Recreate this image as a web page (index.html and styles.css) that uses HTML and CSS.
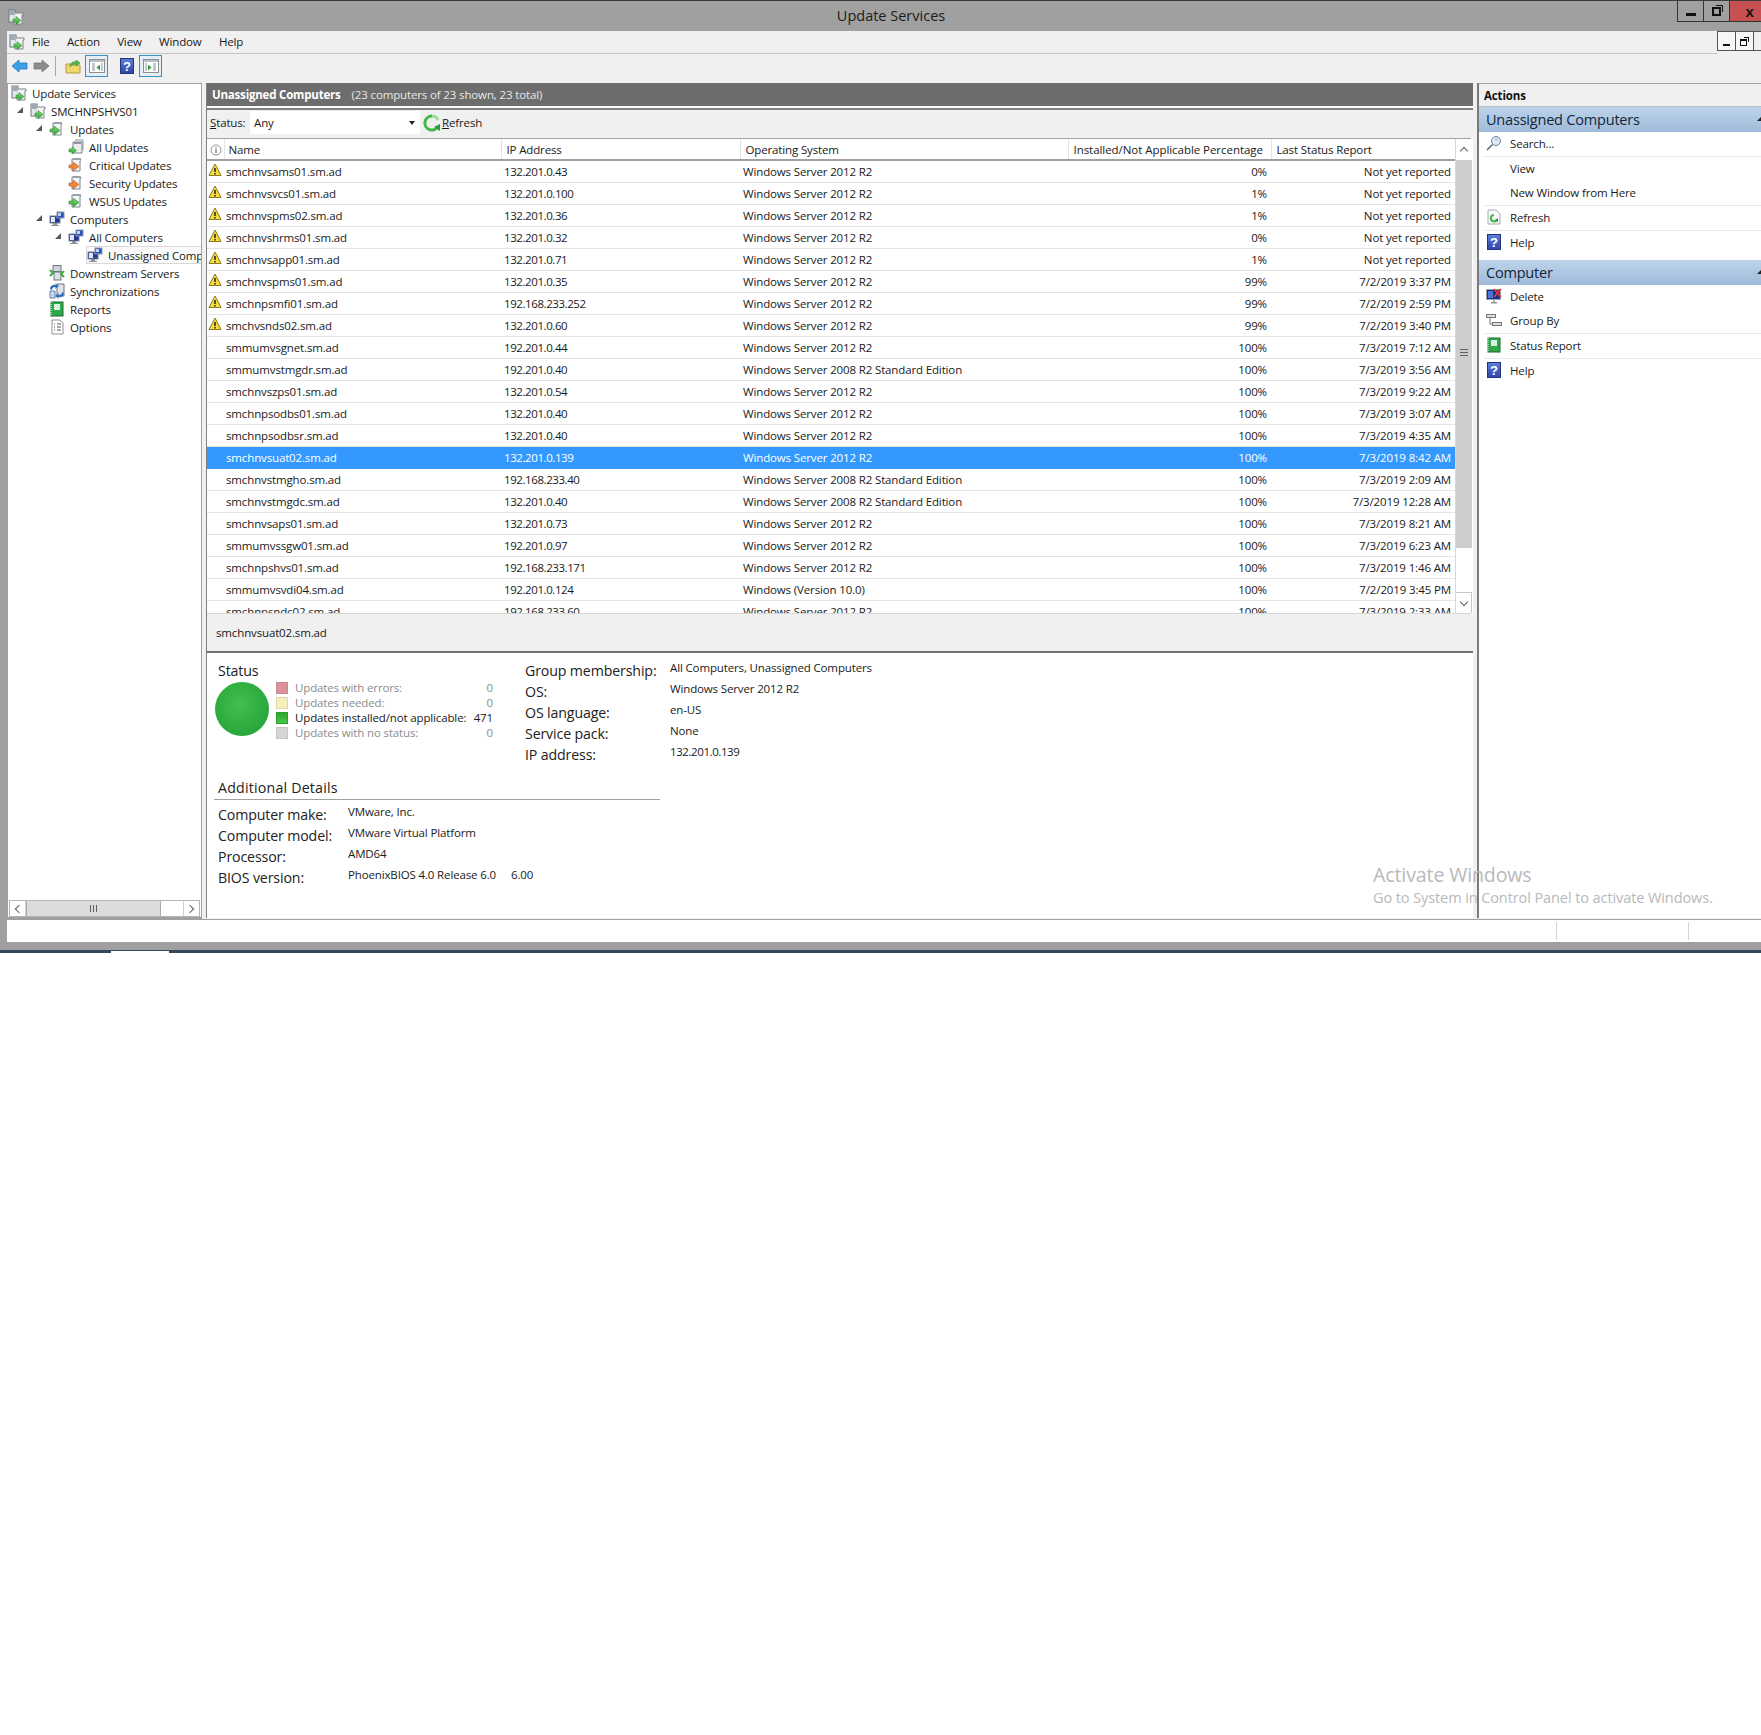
FILE: index.html
```html
<!DOCTYPE html>
<html lang="en">
<head>
<meta charset="utf-8">
<title>Update Services</title>
<link rel="stylesheet" href="styles.css">
</head>
<body>
<svg class="defs" aria-hidden="true">
  <defs>
    <linearGradient id="g-arrow" x1="0" y1="0" x2="0" y2="1"><stop offset="0" stop-color="#7fe07a"/><stop offset="1" stop-color="#2fa32f"/></linearGradient>
    <linearGradient id="g-help" x1="0" y1="0" x2="0" y2="1"><stop offset="0" stop-color="#5f7fd6"/><stop offset="1" stop-color="#2c46a6"/></linearGradient>
    <symbol id="i-server" viewBox="0 0 16 16">
      <rect x="1" y="1" width="6" height="12" fill="#e4e8ec" stroke="#6d7681"/>
      <path d="M2 3h4M2 5h4" stroke="#5d6874"/>
      <path d="M7 4h8v2h-1v9H6v-3" fill="#f4f4f4" stroke="#7b838c"/>
      <path d="M5 10h3V7.500l5 4-5 4V13H5z" fill="url(#g-arrow)" stroke="#2d8c2d" stroke-width="0.6"/>
    </symbol>
    <symbol id="i-updates" viewBox="0 0 16 16">
      <path d="M4 2h9l-1 2v10H4z" fill="#f5f5f5" stroke="#7b838c"/>
      <path d="M5 1h7v2H5z" fill="#9aa3ac"/>
      <path d="M1 8h4V5l6 4.500L5 14v-3H1z" fill="url(#g-arrow)" stroke="#2d8c2d" stroke-width="0.6"/>
    </symbol>
    <symbol id="i-all" viewBox="0 0 16 16">
      <path d="M5 3h9v11H5z" fill="#eee" stroke="#7b838c"/>
      <path d="M7 1h8v10" fill="none" stroke="#8d949c"/>
      <path d="M6 3h7v2H6z" fill="#8f98a1"/>
      <path d="M1 10h3V8l4.500 3.500L4 15v-2H1z" fill="url(#g-arrow)" stroke="#2d8c2d" stroke-width="0.6"/>
    </symbol>
    <symbol id="i-crit" viewBox="0 0 16 16">
      <path d="M4 2h9l-1 2v10H4z" fill="#f5f5f5" stroke="#7b838c"/>
      <path d="M5 1h7v2H5z" fill="#9aa3ac"/>
      <path d="M1 8h4V5l6 4.500L5 14v-3H1z" fill="#f08a3c" stroke="#c4561a" stroke-width="0.6"/>
    </symbol>
    <symbol id="i-computers" viewBox="0 0 16 16">
      <rect x="1" y="5" width="10" height="7" fill="#21379a" stroke="#7b838c"/>
      <path d="M2 6h4v5H2z" fill="#dfe8fa"/>
      <rect x="8" y="1" width="7" height="6" fill="#2a52be" stroke="#8e98a3"/>
      <path d="M9 2h3v3H9z" fill="#bcd5f5"/>
      <path d="M4 12h4v2h2v1H2v-1h2z" fill="#8d949c"/>
    </symbol>
    <symbol id="i-downstream" viewBox="0 0 16 16">
      <rect x="4" y="0.500" width="8" height="6" fill="#cfd4d9" stroke="#6d7681"/>
      <rect x="5" y="7" width="7" height="8" fill="#dfe3e6" stroke="#6d7681"/>
      <path d="M1 5l3 3-3 3M15 6l-3 3 3 3" fill="none" stroke="#3fae3f" stroke-width="2"/>
    </symbol>
    <symbol id="i-sync" viewBox="0 0 16 16">
      <path d="M8 1h7v12H8z" fill="#dfe3e6" stroke="#6d7681"/>
      <path d="M1 6C1 3 4 1 7 2L6 0l4 3-4 3 .5-2C4.500 3.500 3 5 3 7z" fill="#2d6fc0"/>
      <path d="M15 10c0 3-3 5-6 4l1 2-4-3 4-3-.5 2c2 .5 3.500-1 3.500-3z" fill="#2d6fc0"/>
      <path d="M1 8h5v7H1z" fill="#c9d8ec" stroke="#5f7ea8"/>
    </symbol>
    <symbol id="i-report" viewBox="0 0 16 16">
      <rect x="2" y="1" width="12" height="14" fill="#2ea84a" stroke="#1c6b2e"/>
      <rect x="5" y="3" width="6" height="6" fill="#d9f2df"/>
      <path d="M2 1v14" stroke="#a3d9b0" stroke-dasharray="1 1" stroke-width="2"/>
    </symbol>
    <symbol id="i-options" viewBox="0 0 16 16">
      <path d="M3 1h8l3 3v11H3z" fill="#fff" stroke="#8a9097"/>
      <path d="M5 5h1M5 8h1M5 11h1M8 5h4M8 8h4M8 11h4" stroke="#555"/>
    </symbol>
    <symbol id="i-warn" viewBox="0 0 14 14">
      <path d="M7 1l6 11.500H1z" fill="#f7dc3a" stroke="#8a7a20" stroke-linejoin="round"/>
      <path d="M7 5v4M7 10v1.500" stroke="#222" stroke-width="1.500"/>
    </symbol>
    <symbol id="i-help" viewBox="0 0 14 16">
      <rect x="0.500" y="0.500" width="13" height="15" fill="url(#g-help)" stroke="#23367c"/>
      <text x="7" y="13" text-anchor="middle" class="help-q">?</text>
    </symbol>
    <symbol id="i-refresh" viewBox="0 0 18 18">
      <path d="M9 2a7 7 0 1 0 6 10.500" fill="none" stroke="#46b548" stroke-width="3"/>
      <path d="M9 2a7 7 0 0 1 6 4" fill="none" stroke="#98dd95" stroke-width="3"/>
      <path d="M11 13l6-3v7z" fill="#2c9a36"/>
    </symbol>
    <symbol id="i-refdoc" viewBox="0 0 16 16">
      <path d="M2 1h8l4 4v10H2z" fill="#f8f8f8" stroke="#a6abb0"/>
      <path d="M8 6a3.200 3.200 0 1 0 3 4.500" fill="none" stroke="#46b548" stroke-width="2"/>
      <path d="M9 11l3-2v4z" fill="#2c9a36"/>
    </symbol>
    <symbol id="i-search" viewBox="0 0 16 16">
      <circle cx="10" cy="6" r="4.500" fill="#dceaf8" stroke="#6e8297"/>
      <path d="M9 3h3v3H9z" fill="#bcd3ea"/>
      <path d="M6.500 9.500L1 15" stroke="#56606a" stroke-width="1.500"/>
    </symbol>
    <symbol id="i-delete" viewBox="0 0 16 16">
      <rect x="0.500" y="1.500" width="14" height="10" fill="#1b2f8f" stroke="#9aa1a8"/>
      <path d="M2 3h5v7H2z" fill="#4d73d8"/>
      <path d="M5 14h6v1.500H5z" fill="#8c9299"/><path d="M7 11.500h2V14H7z" fill="#aab0b6"/>
      <path d="M8 1l7 8M15 1L8 9" stroke="#dc3c3c" stroke-width="1.800"/>
    </symbol>
    <symbol id="i-group" viewBox="0 0 16 16">
      <rect x="0.500" y="2.500" width="9" height="3" fill="#ddd" stroke="#777"/>
      <rect x="6.500" y="10.500" width="9" height="3" fill="#ddd" stroke="#777"/>
      <path d="M4 6v6h2.500" fill="none" stroke="#777"/>
    </symbol>
    <symbol id="i-info" viewBox="0 0 12 12">
      <circle cx="6" cy="6" r="5" fill="#fff" stroke="#8f8f8f"/>
      <path d="M6 5v4M6 3v1.200" stroke="#555" stroke-width="1.100"/>
    </symbol>
    <symbol id="i-left" viewBox="0 0 17 14"><path d="M1 7l7-6v3h8v6H8v3z" fill="#3f9fe6" stroke="#1f78c0" stroke-width="0.800"/></symbol>
    <symbol id="i-right" viewBox="0 0 17 14"><path d="M16 7L9 1v3H1v6h8v3z" fill="#8c8c8c" stroke="#777" stroke-width="0.800"/></symbol>
    <symbol id="i-folderup" viewBox="0 0 16 16">
      <path d="M1 6h5l1 1h8v8H1z" fill="#f2d76e" stroke="#b59a3a"/>
      <path d="M5 9c0-4 3-6 6-5V2l4 3-4 3V6c-3 0-4 1-6 3z" fill="#55b74d" stroke="#2d8c2d" stroke-width="0.500"/>
    </symbol>
    <symbol id="i-paneleft" viewBox="0 0 16 16">
      <rect x="0.500" y="1.500" width="15" height="13" fill="#fff" stroke="#8a8f94"/>
      <path d="M1 2h14v2H1z" fill="#b9bec3"/>
      <path d="M3 6h3M3 8h3M3 10h3M3 12h3M12 6h2M12 8h2M12 10h2M12 12h2" stroke="#8a8f94"/>
      <path d="M11 6.500v6L7.500 9.500z" fill="#27a044"/>
    </symbol>
    <symbol id="i-paneright" viewBox="0 0 16 16">
      <rect x="0.500" y="1.500" width="15" height="13" fill="#fff" stroke="#8a8f94"/>
      <path d="M1 2h14v2H1z" fill="#b9bec3"/>
      <path d="M2 6h2M2 8h2M2 10h2M2 12h2M10 6h3M10 8h3M10 10h3M10 12h3" stroke="#8a8f94"/>
      <path d="M5 6.500v6l3.500-3z" fill="#27a044"/>
    </symbol>
  </defs>
</svg>

<div class="frame">
  <header class="titlebar">
    <svg class="ico16 app-ico"><use href="#i-server"/></svg>
    <div class="title-text">Update Services</div>
    <div class="winbtns">
      <div class="winbtn"><span class="glyph-min"></span></div>
      <div class="winbtn"><span class="glyph-restore"></span></div>
      <div class="winbtn close"><span class="glyph-x">x</span></div>
    </div>
  </header>

  <div class="client">
    <div class="menubar-row">
      <nav class="menubar">
        <svg class="ico16 menu-ico"><use href="#i-server"/></svg>
        <span class="menu-item">File</span>
        <span class="menu-item">Action</span>
        <span class="menu-item">View</span>
        <span class="menu-item">Window</span>
        <span class="menu-item">Help</span>
      </nav>
      <div class="mdibtns">
        <div class="mdibtn"><span class="mdi-min"></span></div>
        <div class="mdibtn"><span class="mdi-restore"></span></div>
        <div class="mdibtn edge"></div>
      </div>
    </div>

    <div class="toolbar">
      <svg class="tb-arrow"><use href="#i-left"/></svg>
      <svg class="tb-arrow"><use href="#i-right"/></svg>
      <span class="tb-sep"></span>
      <svg class="ico16 tb-folder"><use href="#i-folderup"/></svg>
      <span class="tb-toggle"><svg class="ico16"><use href="#i-paneleft"/></svg></span>
      <svg class="tb-help"><use href="#i-help"/></svg>
      <span class="tb-toggle second"><svg class="ico16"><use href="#i-paneright"/></svg></span>
    </div>

    <main class="panes">
      <aside class="tree">
        <ul class="tree-list">
          <li class="tree-row l0"><svg class="ico16"><use href="#i-server"/></svg><span class="tree-label">Update Services</span></li>
          <li class="tree-row l1"><span class="exp open"></span><svg class="ico16"><use href="#i-server"/></svg><span class="tree-label">SMCHNPSHVS01</span></li>
          <li class="tree-row l2"><span class="exp open"></span><svg class="ico16"><use href="#i-updates"/></svg><span class="tree-label">Updates</span></li>
          <li class="tree-row l3"><span class="exp"></span><svg class="ico16"><use href="#i-all"/></svg><span class="tree-label">All Updates</span></li>
          <li class="tree-row l3"><span class="exp"></span><svg class="ico16"><use href="#i-crit"/></svg><span class="tree-label">Critical Updates</span></li>
          <li class="tree-row l3"><span class="exp"></span><svg class="ico16"><use href="#i-crit"/></svg><span class="tree-label">Security Updates</span></li>
          <li class="tree-row l3"><span class="exp"></span><svg class="ico16"><use href="#i-updates"/></svg><span class="tree-label">WSUS Updates</span></li>
          <li class="tree-row l2"><span class="exp open"></span><svg class="ico16"><use href="#i-computers"/></svg><span class="tree-label">Computers</span></li>
          <li class="tree-row l3"><span class="exp open"></span><svg class="ico16"><use href="#i-computers"/></svg><span class="tree-label">All Computers</span></li>
          <li class="tree-row l4"><span class="exp"></span><span class="tree-sel"><svg class="ico16"><use href="#i-computers"/></svg><span class="tree-label">Unassigned Computers</span></span></li>
          <li class="tree-row l2"><span class="exp"></span><svg class="ico16"><use href="#i-downstream"/></svg><span class="tree-label">Downstream Servers</span></li>
          <li class="tree-row l2"><span class="exp"></span><svg class="ico16"><use href="#i-sync"/></svg><span class="tree-label">Synchronizations</span></li>
          <li class="tree-row l2"><span class="exp"></span><svg class="ico16"><use href="#i-report"/></svg><span class="tree-label">Reports</span></li>
          <li class="tree-row l2"><span class="exp"></span><svg class="ico16"><use href="#i-options"/></svg><span class="tree-label">Options</span></li>
        </ul>
        <div class="hscroll">
          <span class="hs-btn"><span class="chev chev-left"></span></span>
          <span class="hs-thumb"><span class="grip-v"></span></span>
          <span class="hs-track"></span>
          <span class="hs-btn"><span class="chev chev-right"></span></span>
        </div>
      </aside>

      <section class="center">
        <div class="center-head"><strong>Unassigned Computers</strong><span class="center-count">(23 computers of 23 shown, 23 total)</span></div>
        <div class="filterbar">
          <span class="filter-label"><u>S</u>tatus:</span>
          <span class="combo"><span>Any</span><span class="combo-arrow"></span></span>
          <svg class="refresh-ico"><use href="#i-refresh"/></svg>
          <span class="refresh-text"><u>R</u>efresh</span>
        </div>

        <div class="listwrap">
          <div class="listclip">
            <table class="grid">
              <thead>
                <tr>
                  <th class="c-ico"><svg class="info-ico"><use href="#i-info"/></svg></th>
                  <th class="c-name"><span class="hd-name">Name</span></th>
                  <th class="c-ip">IP Address</th>
                  <th class="c-os">Operating System</th>
                  <th class="c-pct">Installed/Not Applicable Percentage</th>
                  <th class="c-date">Last Status Report</th>
                </tr>
              </thead>
              <tbody>
                <tr><td class="warn"><svg><use href="#i-warn"/></svg></td><td>smchnvsams01.sm.ad</td><td>132.201.0.43</td><td>Windows Server 2012 R2</td><td class="num">0%</td><td class="num">Not yet reported</td></tr>
                <tr><td class="warn"><svg><use href="#i-warn"/></svg></td><td>smchnvsvcs01.sm.ad</td><td>132.201.0.100</td><td>Windows Server 2012 R2</td><td class="num">1%</td><td class="num">Not yet reported</td></tr>
                <tr><td class="warn"><svg><use href="#i-warn"/></svg></td><td>smchnvspms02.sm.ad</td><td>132.201.0.36</td><td>Windows Server 2012 R2</td><td class="num">1%</td><td class="num">Not yet reported</td></tr>
                <tr><td class="warn"><svg><use href="#i-warn"/></svg></td><td>smchnvshrms01.sm.ad</td><td>132.201.0.32</td><td>Windows Server 2012 R2</td><td class="num">0%</td><td class="num">Not yet reported</td></tr>
                <tr><td class="warn"><svg><use href="#i-warn"/></svg></td><td>smchnvsapp01.sm.ad</td><td>132.201.0.71</td><td>Windows Server 2012 R2</td><td class="num">1%</td><td class="num">Not yet reported</td></tr>
                <tr><td class="warn"><svg><use href="#i-warn"/></svg></td><td>smchnvspms01.sm.ad</td><td>132.201.0.35</td><td>Windows Server 2012 R2</td><td class="num">99%</td><td class="num">7/2/2019 3:37 PM</td></tr>
                <tr><td class="warn"><svg><use href="#i-warn"/></svg></td><td>smchnpsmfi01.sm.ad</td><td>192.168.233.252</td><td>Windows Server 2012 R2</td><td class="num">99%</td><td class="num">7/2/2019 2:59 PM</td></tr>
                <tr><td class="warn"><svg><use href="#i-warn"/></svg></td><td>smchvsnds02.sm.ad</td><td>132.201.0.60</td><td>Windows Server 2012 R2</td><td class="num">99%</td><td class="num">7/2/2019 3:40 PM</td></tr>
                <tr><td></td><td>smmumvsgnet.sm.ad</td><td>192.201.0.44</td><td>Windows Server 2012 R2</td><td class="num">100%</td><td class="num">7/3/2019 7:12 AM</td></tr>
                <tr><td></td><td>smmumvstmgdr.sm.ad</td><td>192.201.0.40</td><td>Windows Server 2008 R2 Standard Edition</td><td class="num">100%</td><td class="num">7/3/2019 3:56 AM</td></tr>
                <tr><td></td><td>smchnvszps01.sm.ad</td><td>132.201.0.54</td><td>Windows Server 2012 R2</td><td class="num">100%</td><td class="num">7/3/2019 9:22 AM</td></tr>
                <tr><td></td><td>smchnpsodbs01.sm.ad</td><td>132.201.0.40</td><td>Windows Server 2012 R2</td><td class="num">100%</td><td class="num">7/3/2019 3:07 AM</td></tr>
                <tr><td></td><td>smchnpsodbsr.sm.ad</td><td>132.201.0.40</td><td>Windows Server 2012 R2</td><td class="num">100%</td><td class="num">7/3/2019 4:35 AM</td></tr>
                <tr class="selected"><td></td><td>smchnvsuat02.sm.ad</td><td>132.201.0.139</td><td>Windows Server 2012 R2</td><td class="num">100%</td><td class="num">7/3/2019 8:42 AM</td></tr>
                <tr><td></td><td>smchnvstmgho.sm.ad</td><td>192.168.233.40</td><td>Windows Server 2008 R2 Standard Edition</td><td class="num">100%</td><td class="num">7/3/2019 2:09 AM</td></tr>
                <tr><td></td><td>smchnvstmgdc.sm.ad</td><td>132.201.0.40</td><td>Windows Server 2008 R2 Standard Edition</td><td class="num">100%</td><td class="num">7/3/2019 12:28 AM</td></tr>
                <tr><td></td><td>smchnvsaps01.sm.ad</td><td>132.201.0.73</td><td>Windows Server 2012 R2</td><td class="num">100%</td><td class="num">7/3/2019 8:21 AM</td></tr>
                <tr><td></td><td>smmumvssgw01.sm.ad</td><td>192.201.0.97</td><td>Windows Server 2012 R2</td><td class="num">100%</td><td class="num">7/3/2019 6:23 AM</td></tr>
                <tr><td></td><td>smchnpshvs01.sm.ad</td><td>192.168.233.171</td><td>Windows Server 2012 R2</td><td class="num">100%</td><td class="num">7/3/2019 1:46 AM</td></tr>
                <tr><td></td><td>smmumvsvdi04.sm.ad</td><td>192.201.0.124</td><td>Windows (Version 10.0)</td><td class="num">100%</td><td class="num">7/2/2019 3:45 PM</td></tr>
                <tr><td></td><td>smchnpsndc02.sm.ad</td><td>192.168.233.60</td><td>Windows Server 2012 R2</td><td class="num">100%</td><td class="num">7/3/2019 2:33 AM</td></tr>
              </tbody>
            </table>
          </div>
          <div class="vscroll">
            <span class="vs-btn"><span class="chev chev-up"></span></span>
            <span class="vs-thumb"><span class="grip-h"></span></span>
            <span class="vs-track"></span>
            <span class="vs-btn"><span class="chev chev-down"></span></span>
          </div>
        </div>

        <div class="detail-title">smchnvsuat02.sm.ad</div>

        <div class="details">
          <div class="status-row">
            <div class="status-block">
              <div class="big-label status-h">Status</div>
              <div class="status-body">
                <div class="orb"></div>
                <ul class="legend">
                  <li class="muted"><span class="sq sq-err"></span><span class="lg-text">Updates with errors:</span><span>0</span></li>
                  <li class="muted"><span class="sq sq-need"></span><span class="lg-text">Updates needed:</span><span>0</span></li>
                  <li><span class="sq sq-ok"></span><span class="lg-text">Updates installed/not applicable:</span><span>471</span></li>
                  <li class="muted"><span class="sq sq-none"></span><span class="lg-text">Updates with no status:</span><span>0</span></li>
                </ul>
              </div>
            </div>
            <div class="kv group-kv">
              <div class="kv-keys">
                <div class="big-label">Group membership:</div>
                <div class="big-label">OS:</div>
                <div class="big-label">OS language:</div>
                <div class="big-label">Service pack:</div>
                <div class="big-label">IP address:</div>
              </div>
              <div class="kv-vals">
                <div>All Computers, Unassigned Computers</div>
                <div>Windows Server 2012 R2</div>
                <div>en-US</div>
                <div>None</div>
                <div class="ip-val">132.201.0.139</div>
              </div>
            </div>
          </div>
          <div class="big-label add-title">Additional Details</div>
          <div class="kv add-kv">
            <div class="kv-keys">
              <div class="big-label">Computer make:</div>
              <div class="big-label">Computer model:</div>
              <div class="big-label">Processor:</div>
              <div class="big-label">BIOS version:</div>
            </div>
            <div class="kv-vals">
              <div>VMware, Inc.</div>
              <div>VMware Virtual Platform</div>
              <div>AMD64</div>
              <div class="bios"><span>PhoenixBIOS 4.0 Release 6.0</span><span>6.00</span></div>
            </div>
          </div>
        </div>
      </section>

      <aside class="actions">
        <div class="actions-head">Actions</div>
        <div class="act-section"><span>Unassigned Computers</span><span class="act-caret"></span></div>
        <div class="act-item sep"><svg class="ico16"><use href="#i-search"/></svg><span>Search...</span></div>
        <div class="act-item"><span class="ico16"></span><span>View</span></div>
        <div class="act-item sep"><span class="ico16"></span><span>New Window from Here</span></div>
        <div class="act-item sep"><svg class="ico16"><use href="#i-refdoc"/></svg><span>Refresh</span></div>
        <div class="act-item"><svg class="ico16"><use href="#i-help"/></svg><span>Help</span></div>
        <div class="act-section second"><span>Computer</span><span class="act-caret"></span></div>
        <div class="act-item"><svg class="ico16"><use href="#i-delete"/></svg><span>Delete</span></div>
        <div class="act-item sep"><svg class="ico16"><use href="#i-group"/></svg><span>Group By</span></div>
        <div class="act-item sep"><svg class="ico16"><use href="#i-report"/></svg><span>Status Report</span></div>
        <div class="act-item"><svg class="ico16"><use href="#i-help"/></svg><span>Help</span></div>
      </aside>
    </main>

    <footer class="statusbar">
      <span class="sb-cell"></span>
      <span class="sb-cell fixed-a"></span>
      <span class="sb-cell fixed-b"></span>
    </footer>
  </div>

  <div class="taskbar-edge"><span class="task-tab"></span></div>

  <div class="watermark">
    <div class="wm-big">Activate Windows</div>
    <div class="wm-small">Go to System in Control Panel to activate Windows.</div>
  </div>
</div>
</body>
</html>
```

FILE: styles.css
```css
* { box-sizing: border-box; }

html, body {
  margin: 0;
  padding: 0;
  background: #fff;
}

body {
  font-family: "Open Sans", "Noto Sans", "Liberation Sans", sans-serif;
  font-size: 11.5px;
  letter-spacing: -0.14px;
  color: #1a1a1a;
}

ul { list-style: none; margin: 0; padding: 0; }

.defs { position: absolute; width: 0; height: 0; overflow: hidden; }

.ico16 { width: 16px; height: 16px; flex: none; display: block; }

.help-q { font: bold 13px "Liberation Sans", sans-serif; fill: #fff; }

.frame {
  position: relative;
  height: 953px;
  background: #a0a0a0;
  display: flex;
  flex-direction: column;
}

/* title bar */
.titlebar {
  height: 31px;
  flex: none;
  display: flex;
  align-items: flex-start;
  border-top: 1px solid #3a3a3a;
}

.app-ico { margin: 8px 0 0 8px; }

.title-text {
  flex: 1;
  text-align: center;
  font-size: 14.5px;
  letter-spacing: 0;
  line-height: 30px;
  padding-left: 81px;
  color: #1c1c1c;
}

.winbtns { display: flex; height: 21px; width: 84px; flex: none; }

.winbtn {
  width: 27px;
  height: 21px;
  border: 1px solid #333;
  border-top: 0;
  border-left-width: 1px;
  display: flex;
  align-items: center;
  justify-content: center;
  margin-right: -1px;
}

.winbtn.close {
  width: 32px;
  background: #c75050;
  border-right: 0;
  padding-left: 8px;
}

.glyph-min { width: 10px; height: 3px; background: #111; margin-top: 6px; }

.glyph-restore {
  width: 9px;
  height: 9px;
  border: 2px solid #111;
  box-shadow: 2px -2px 0 -1px #a0a0a0, 3px -3px 0 -1px #111;
}

.glyph-x { font: bold 15px/15px "Liberation Sans", sans-serif; color: #111; }

/* client area */
.client {
  flex: 1;
  margin-left: 7px;
  background: #f0f0f0;
  display: flex;
  flex-direction: column;
  min-height: 0;
}

.menubar-row {
  height: 23px;
  flex: none;
  display: flex;
  align-items: flex-start;
}

.menubar {
  flex: 1;
  height: 23px;
  display: flex;
  align-items: center;
  border-bottom: 1px solid #c4c4c4;
  padding: 0 0 1px 2px;
}

.menu-ico { margin-right: 7px; }

.menu-item { margin-right: 17.3px; }

.mdibtns { display: flex; flex: none; width: 44px; height: 20px; }

.mdibtn {
  width: 19px;
  height: 20px;
  border: 1px solid #555;
  background: #f7f7f7;
  margin-right: -1px;
  display: flex;
  align-items: center;
  justify-content: center;
}

.mdibtn.edge { width: 8px; border-right: 0; background: #f0f0f0; }

.mdi-min { width: 7px; height: 2px; background: #111; margin-top: 8px; }

.mdi-restore {
  width: 7px;
  height: 7px;
  border: 1px solid #111;
  border-top-width: 2px;
  box-shadow: 2px -2px 0 -1px #f7f7f7, 3px -3px 0 -1px #111;
  margin: 2px 2px 0 0;
}

.toolbar {
  height: 29px;
  flex: none;
  display: flex;
  align-items: center;
  padding: 0 0 6px 4px;
}

.tb-arrow { width: 17px; height: 14px; margin-right: 5px; flex: none; }

.tb-sep { width: 1px; height: 20px; background: #a8a8a8; margin: 0 9px 0 0; }

.tb-folder { margin-right: 4px; }

.tb-toggle {
  width: 23px;
  height: 22px;
  border: 1px solid #3c8fc6;
  background: #e3eef7;
  display: flex;
  align-items: center;
  justify-content: center;
  flex: none;
}

.tb-toggle.second { margin-left: 5px; }

.tb-help { width: 14px; height: 16px; margin-left: 12px; flex: none; }

/* panes */
.panes {
  flex: 1;
  min-height: 0;
  display: flex;
  border-bottom: 1px solid #a0a0a0;
}

.tree {
  width: 195px;
  flex: none;
  background: #fff;
  border: 1px solid #a0a0a0;
  border-bottom-width: 2px;
  display: flex;
  flex-direction: column;
  min-height: 0;
}

.tree-list { flex: 1; overflow: hidden; }

.tree-row {
  height: 18px;
  display: flex;
  align-items: center;
  white-space: nowrap;
  overflow: hidden;
}

.tree-label { margin-left: 5px; }

.l0 { padding-left: 3px; }
.l1 { padding-left: 8px; }
.l2 { padding-left: 27px; }
.l3 { padding-left: 46px; }
.l4 { padding-left: 65px; }

.exp {
  width: 14px;
  flex: none;
  display: block;
  height: 8px;
}

.exp.open::before {
  content: "";
  display: block;
  width: 0;
  height: 0;
  margin-left: 1px;
  border-style: solid;
  border-width: 0 0 6px 6px;
  border-color: transparent transparent #595959 transparent;
}

.tree-sel {
  flex: 1;
  display: flex;
  align-items: center;
  height: 18px;
  border: 1px solid #d9d9d9;
  border-right: 0;
  background: #fafafa;
  margin-left: -1px;
  margin-right: -100px;
}

.hscroll {
  height: 17px;
  flex: none;
  display: flex;
  align-items: stretch;
  border: 1px solid #b5b5b5;
  margin: 0 1px;
}

.hs-btn { width: 16px; flex: none; display: flex; align-items: center; justify-content: center; background: #fff; border-right: 1px solid #cfcfcf; }
.hs-btn:last-child { border-right: 0; border-left: 1px solid #cfcfcf; }
.hs-thumb { width: 135px; flex: none; background: #dcdcdc; border: 1px solid #ababab; border-width: 0 1px; display: flex; align-items: center; justify-content: center; }
.hs-track { flex: 1; background: #fff; }

.grip-v {
  width: 7px;
  height: 7px;
  background: repeating-linear-gradient(90deg, #606060 0 1px, transparent 1px 3px);
}

.grip-h {
  width: 8px;
  height: 7px;
  background: repeating-linear-gradient(180deg, #606060 0 1px, transparent 1px 3px);
}

.chev {
  width: 6px;
  height: 6px;
  border-left: 1.500px solid #606060;
  border-top: 1.500px solid #606060;
  display: block;
}

.chev-left { transform: rotate(-45deg); margin-left: 3px; }
.chev-right { transform: rotate(135deg); margin-right: 3px; }
.chev-up { transform: rotate(45deg); margin-top: 3px; }
.chev-down { transform: rotate(225deg); margin-bottom: 3px; }

/* center */
.center {
  width: 1267px;
  flex: none;
  margin-left: 4px;
  margin-bottom: 1px;
  display: flex;
  flex-direction: column;
  background: #fff;
  border-left: 1px solid #808080;
  min-height: 0;
}

.center-head {
  height: 23px;
  flex: none;
  background: #6d6d6d;
  color: #fff;
  line-height: 23px;
  padding-left: 5px;
}

.center-head strong { font-weight: 700; letter-spacing: -0.2px; }

.center-count { margin-left: 11px; color: #e8e8e8; }

.filterbar {
  height: 30px;
  flex: none;
  display: flex;
  align-items: center;
  background: #f0f0f0;
  border-top: 2px solid #808080;
  margin-top: 2px;
  padding: 0 0 3px 3px;
}

.filter-label { width: 40px; flex: none; }

.combo {
  width: 170px;
  height: 23px;
  flex: none;
  background: #fff;
  display: flex;
  align-items: center;
  justify-content: space-between;
  padding: 0 5px 0 4px;
}

.combo-arrow {
  width: 0;
  height: 0;
  border: 3.500px solid transparent;
  border-top: 4px solid #222;
  border-bottom: 0;
}

.refresh-ico { width: 18px; height: 18px; margin-left: 3px; flex: none; }

.refresh-text { margin-left: 1px; }

.listwrap {
  height: 476px;
  flex: none;
  display: flex;
  border-top: 1px solid #a0a0a0;
  border-bottom: 1px solid #d8d8d8;
  margin-right: 2px;
}

.listclip {
  width: 1248px;
  flex: none;
  overflow: hidden;
  background: #fff;
}

.grid {
  width: 1248px;
  table-layout: fixed;
  border-collapse: collapse;
}

.grid th {
  height: 21px;
  font-weight: 400;
  text-align: left;
  padding: 0 0 0 5px;
  border-bottom: 2px solid #a0a0a0;
  border-left: 1px solid #e2e2e2;
  white-space: nowrap;
}

.grid th:first-child { border-left: 0; padding: 0; }

.c-ico { width: 17px; }
.c-name { width: 277px; }
.c-ip { width: 239px; }
.c-os { width: 328px; }
.c-pct { width: 203px; letter-spacing: -0.05px; }
.c-date { width: 184px; }

.hd-name { margin-left: -1px; }

.info-ico { width: 12px; height: 12px; margin: 2px 0 0 3px; display: block; }

.grid td {
  height: 22px;
  padding: 0 0 0 2px;
  border-bottom: 1px solid #e3e3e3;
  white-space: nowrap;
  overflow: hidden;
}

.grid td:first-child { padding: 0; }

.grid td:nth-child(n+3) { padding-left: 3px; }

.grid td:nth-child(3) { letter-spacing: -0.42px; }

.grid td.num { text-align: right; padding: 0 4px 0 0; }

.warn svg { width: 14px; height: 14px; display: block; margin: -2px 0 0 1px; }

.selected td { background: #3399ff; color: #fff; border-bottom-color: #3399ff; }

.vscroll {
  width: 17px;
  flex: none;
  display: flex;
  flex-direction: column;
  border-left: 1px solid #d8d8d8;
}

.vs-btn {
  height: 21px;
  flex: none;
  background: #fff;
  display: flex;
  align-items: center;
  justify-content: center;
}

.vs-btn:last-child { border-top: 1px solid #c8c8c8; border-right: 1px solid #c8c8c8; }

.vs-thumb {
  height: 388px;
  flex: none;
  background: #cdcdcd;
  display: flex;
  align-items: center;
  justify-content: center;
  padding-bottom: 4px;
}

.vs-track { flex: 1; background: #fff; }

.detail-title {
  height: 39px;
  flex: none;
  background: #f0f0f0;
  border-bottom: 2px solid #707070;
  padding-left: 9px;
  line-height: 37px;
}

.details {
  flex: 1;
  min-height: 0;
  padding: 7px 0 0 7px;
  background: #fff;
}

.big-label { font-size: 14.2px; line-height: 21px; color: #222; }

.status-row { display: flex; height: 117px; }

.status-block { width: 311px; flex: none; }

.status-h { margin-left: 4px; }

.status-body { display: flex; margin-top: -1px; }

.orb {
  width: 54px;
  height: 54px;
  margin: 2px 0 0 1px;
  border-radius: 50%;
  background: radial-gradient(circle at 45% 42%, #45bd4e 0, #26a63a 75%, #1c9430 100%);
  flex: none;
}

.legend { width: 217px; margin-left: 7px; flex: none; }

.legend li { height: 15px; display: flex; align-items: center; font-size: 11.5px; }

.legend .muted { color: #8c8c8c; }

.lg-text { flex: 1; white-space: nowrap; }

.sq { width: 12px; height: 12px; margin-right: 7px; flex: none; border: 1px solid transparent; }
.sq-err { background: #d9949a; border-color: #cc8a90; }
.sq-need { background: #f7efbe; border-color: #dcd6a8; }
.sq-ok { background: linear-gradient(#2fa52f, #45c845); border-color: #2c9c2c; }
.sq-none { background: #d6d6d6; border-color: #c4c4c4; }

.kv { display: flex; }

.kv-vals { margin-top: -3px; }

.kv-vals > div { height: 21px; line-height: 21px; white-space: nowrap; }

.kv-vals > .ip-val { letter-spacing: -0.42px; }

.group-kv .kv-keys { width: 145px; flex: none; }

.add-title {
  width: 446px;
  height: 23px;
  padding-left: 4px;
  letter-spacing: 0.2px;
  border-bottom: 1px solid #a0a0a0;
}

.add-kv { margin: 4px 0 0 4px; }

.add-kv .kv-keys { width: 130px; flex: none; }

.bios { display: flex; }

.bios span:first-child { width: 163px; }

/* actions */
.actions {
  flex: 1;
  min-width: 0;
  margin-left: 4px;
  margin-bottom: 1px;
  background: #fff;
  border-left: 2px solid #7a7a7a;
  border-top: 1px solid #a0a0a0;
}

.actions-head {
  height: 23px;
  background: #f0f0f0;
  font-weight: 700;
  padding-left: 5px;
  line-height: 24px;
  border-bottom: 1px solid #c0c0c0;
  color: #111;
}

.act-section {
  height: 25px;
  background: linear-gradient(#bdd3ea, #9fbbd9);
  font-size: 14.5px;
  letter-spacing: -0.2px;
  line-height: 26px;
  padding-left: 7px;
  display: flex;
  justify-content: space-between;
  color: #12253a;
}

.act-section.second { margin-top: 5px; }

.act-caret {
  width: 0;
  height: 0;
  border: 4px solid transparent;
  border-bottom: 4px solid #222;
  border-top: 0;
  margin: 10px -4px 0 0;
}

.act-item {
  height: 24px;
  display: flex;
  align-items: center;
  margin-left: 5px;
  padding: 0 0 2px 2px;
}

.act-item.sep { height: 25px; border-bottom: 1px solid #e8e8e8; }

.act-item > span:last-child { margin-left: 8px; }

/* status bar */
.statusbar {
  height: 22px;
  flex: none;
  background: #fff;
  display: flex;
}

.sb-cell { flex: 1; border-left: 1px solid #d4d4d4; margin: 2px 0; }
.sb-cell:first-child { border-left: 0; }
.fixed-a { flex: none; width: 132px; }
.fixed-b { flex: none; width: 73px; }

.taskbar-edge {
  position: relative;
  height: 11px;
  flex: none;
  background: #a0a0a0;
  border-bottom: 3px solid #33465c;
}

.task-tab {
  position: absolute;
  left: 110px;
  bottom: -3px;
  width: 60px;
  height: 3px;
  background: #fff;
  border-top: 1px solid #33465c;
  border-left: 1px solid #33465c;
  border-right: 1px solid #33465c;
}

.watermark {
  position: absolute;
  left: 1373px;
  top: 861px;
  color: #b9b9b9;
  white-space: nowrap;
  pointer-events: none;
}

.wm-big { font-size: 19.6px; line-height: 28px; }
.wm-small { font-size: 14.5px; line-height: 17px; letter-spacing: -0.09px; }
```
